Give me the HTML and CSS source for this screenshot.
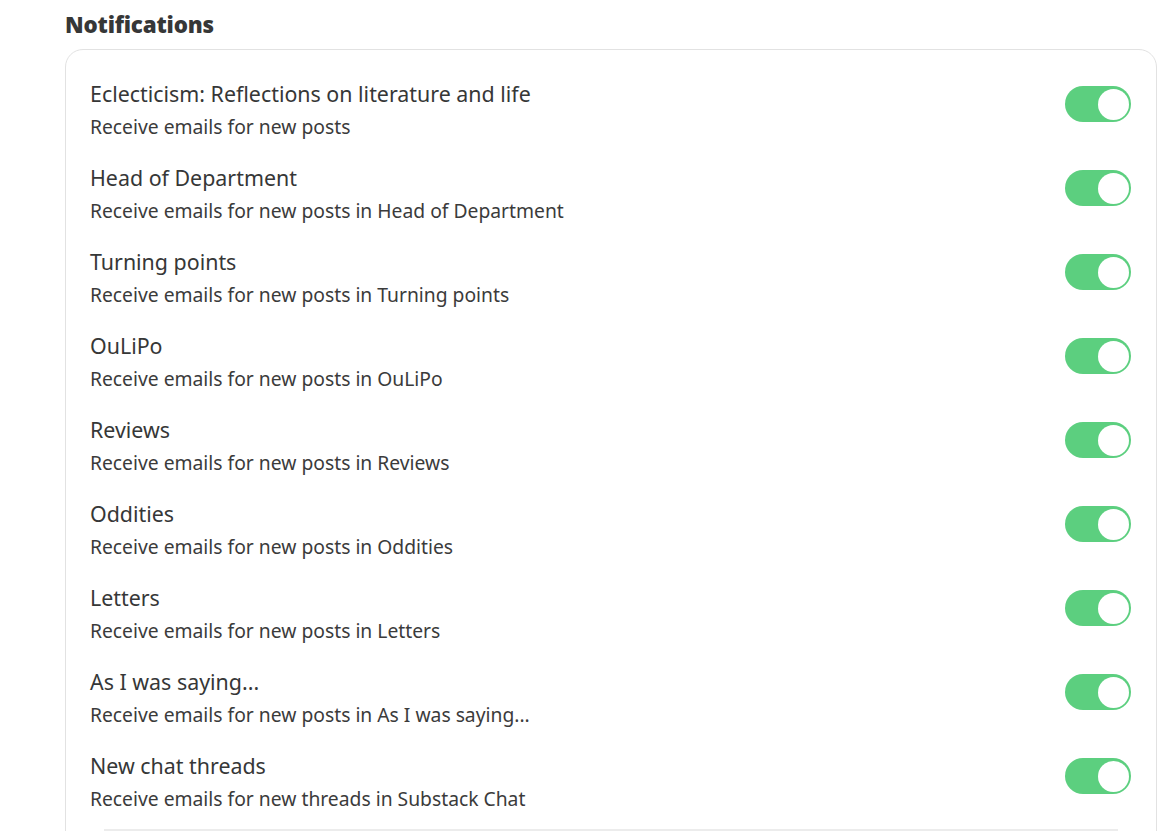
FILE: index.html
```html
<!DOCTYPE html>
<html lang="en">
<head>
    <meta charset="UTF-8">
    <title>Notifications</title>
    <link rel="stylesheet" href="styles.css">
</head>
<body>
    <div class="page">
        <h2 class="section-title">Notifications</h2>
        <div class="card">
            <div class="row">
                <div class="text">
                    <div class="title">Eclecticism: Reflections on literature and life</div>
                    <div class="sub">Receive emails for new posts</div>
                </div>
                <span class="toggle on"><span class="knob"></span></span>
            </div>
            <div class="row">
                <div class="text">
                    <div class="title">Head of Department</div>
                    <div class="sub">Receive emails for new posts in Head of Department</div>
                </div>
                <span class="toggle on"><span class="knob"></span></span>
            </div>
            <div class="row">
                <div class="text">
                    <div class="title">Turning points</div>
                    <div class="sub">Receive emails for new posts in Turning points</div>
                </div>
                <span class="toggle on"><span class="knob"></span></span>
            </div>
            <div class="row">
                <div class="text">
                    <div class="title">OuLiPo</div>
                    <div class="sub">Receive emails for new posts in OuLiPo</div>
                </div>
                <span class="toggle on"><span class="knob"></span></span>
            </div>
            <div class="row">
                <div class="text">
                    <div class="title">Reviews</div>
                    <div class="sub">Receive emails for new posts in Reviews</div>
                </div>
                <span class="toggle on"><span class="knob"></span></span>
            </div>
            <div class="row">
                <div class="text">
                    <div class="title">Oddities</div>
                    <div class="sub">Receive emails for new posts in Oddities</div>
                </div>
                <span class="toggle on"><span class="knob"></span></span>
            </div>
            <div class="row">
                <div class="text">
                    <div class="title">Letters</div>
                    <div class="sub">Receive emails for new posts in Letters</div>
                </div>
                <span class="toggle on"><span class="knob"></span></span>
            </div>
            <div class="row">
                <div class="text">
                    <div class="title">As I was saying...</div>
                    <div class="sub">Receive emails for new posts in As I was saying...</div>
                </div>
                <span class="toggle on"><span class="knob"></span></span>
            </div>
            <div class="row">
                <div class="text">
                    <div class="title">New chat threads</div>
                    <div class="sub">Receive emails for new threads in Substack Chat</div>
                </div>
                <span class="toggle on"><span class="knob"></span></span>
            </div>
            <div class="divider"></div>
        </div>
    </div>
</body>
</html>
```

FILE: styles.css
```css
body {
    margin: 0;
    font-family: "Noto Sans", "Open Sans", sans-serif;
    background-color: #ffffff;
    color: #363737;
}
.page {
    padding: 0 18px 0 65px;
}
.section-title {
    margin: 0;
    padding-top: 11px;
    font-size: 22.4px;
    line-height: 28px;
    font-weight: 900;
    color: #363737;
    letter-spacing: -0.2px;
}
.card {
    margin-top: 10px;
    border: 1px solid #e2e2e2;
    border-radius: 18px;
    padding: 18px 25px 60px 24px;
}
.row {
    display: flex;
    justify-content: space-between;
    align-items: flex-start;
    padding: 12px 0;
}
.title {
    font-size: 21.4px;
    line-height: 28px;
    color: #363737;
}
.sub {
    font-size: 19.3px;
    line-height: 26px;
    color: #3b3b3b;
    margin-top: 6px;
}
.toggle {
    display: flex;
    justify-content: flex-end;
    align-items: center;
    width: 66px;
    height: 36px;
    border-radius: 18px;
    background-color: #5ccf7f;
    margin-top: 6px;
    box-sizing: border-box;
    padding: 0 2px;
}
.knob {
    width: 31px;
    height: 31px;
    border-radius: 50%;
    background-color: #ffffff;
}
.divider {
    margin: 5px 13px 0 14px;
    border-top: 2px solid #ececec;
}
```
